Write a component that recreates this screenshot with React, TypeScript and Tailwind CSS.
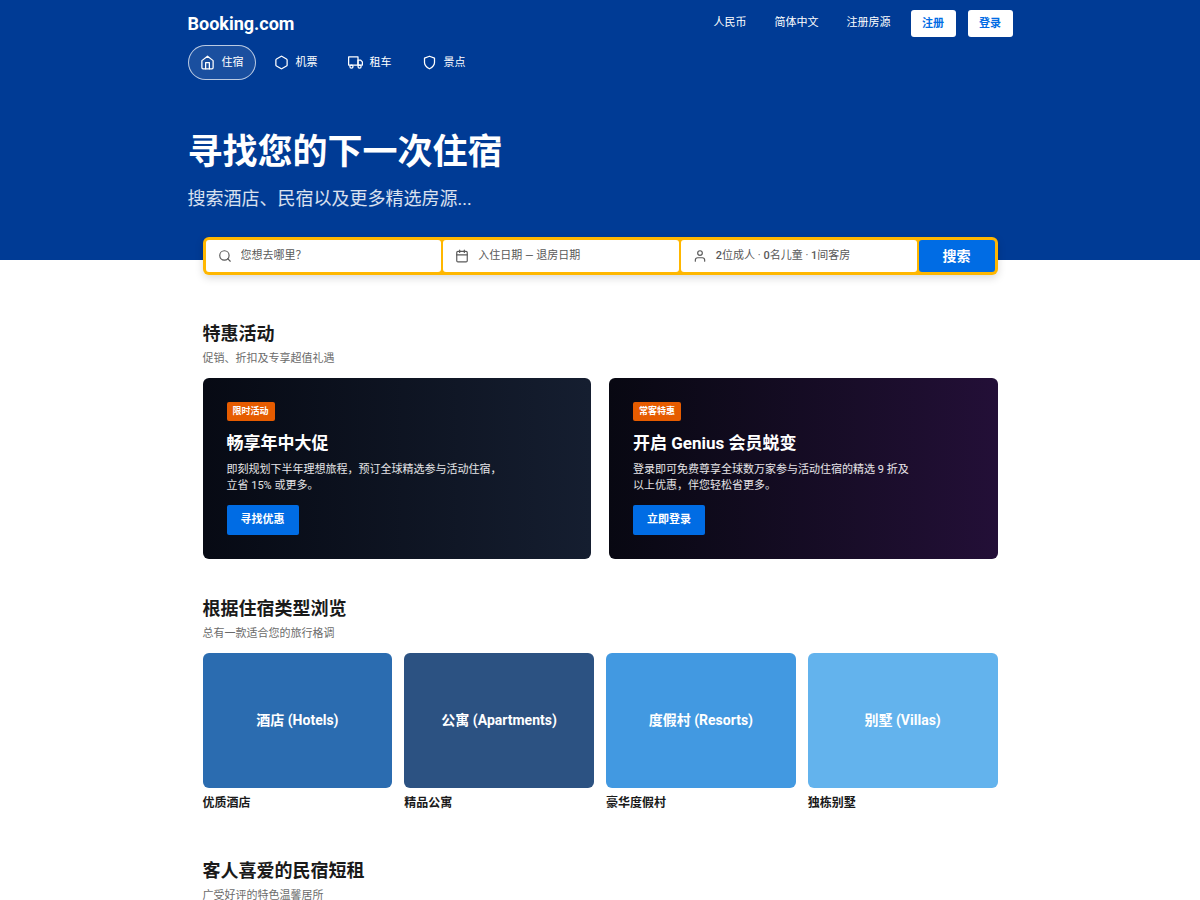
import React, { useState } from 'react';
import type { IconType } from 'react-icons';
import { FiHome, FiHexagon, FiTruck, FiShield, FiSearch, FiCalendar, FiUser } from 'react-icons/fi';

interface NavTab {
  id: string;
  label: string;
  icon: IconType;
}

interface Promo {
  badge: string;
  title: string;
  text: string;
  action: string;
  background: string;
}

interface PropertyType {
  name: string;
  caption: string;
  color: string;
}

const tabs: NavTab[] = [
  { id: 'stays', label: '住宿', icon: FiHome },
  { id: 'flights', label: '机票', icon: FiHexagon },
  { id: 'cars', label: '租车', icon: FiTruck },
  { id: 'attractions', label: '景点', icon: FiShield },
];

const headerLinks = ['人民币', '简体中文', '注册房源'];

const promos: Promo[] = [
  {
    badge: '限时活动',
    title: '畅享年中大促',
    text: '即刻规划下半年理想旅程，预订全球精选参与活动住宿，立省 15% 或更多。',
    action: '寻找优惠',
    background: 'bg-linear-to-r from-[#070a14] to-[#151e30]',
  },
  {
    badge: '常客特惠',
    title: '开启 Genius 会员蜕变',
    text: '登录即可免费尊享全球数万家参与活动住宿的精选 9 折及以上优惠，伴您轻松省更多。',
    action: '立即登录',
    background: 'bg-linear-to-r from-[#080812] to-[#230f37]',
  },
];

const propertyTypes: PropertyType[] = [
  { name: '酒店 (Hotels)', caption: '优质酒店', color: 'bg-[#2b6cb0]' },
  { name: '公寓 (Apartments)', caption: '精品公寓', color: 'bg-[#2c5282]' },
  { name: '度假村 (Resorts)', caption: '豪华度假村', color: 'bg-[#4299e1]' },
  { name: '别墅 (Villas)', caption: '独栋别墅', color: 'bg-[#63b3ed]' },
];

function Header() {
  const [activeTab, setActiveTab] = useState('stays');

  return (
    <header className="bg-[#003b95] text-white pt-[9px] pb-12">
      <div className="max-w-[825px] mx-auto">
        <div className="flex items-center justify-between">
          <a href="#" className="text-[18px] leading-[27px] font-bold">Booking.com</a>
          <div className="flex items-center gap-3 text-[11px] leading-[28px]">
            {headerLinks.map((label) => (
              <a key={label} href="#" className="px-2">{label}</a>
            ))}
            <button className="w-[45px] h-[27px] bg-white text-[#006ce4] font-bold rounded-[3px]">注册</button>
            <button className="w-[45px] h-[27px] bg-white text-[#006ce4] font-bold rounded-[3px]">登录</button>
          </div>
        </div>

        <nav className="flex gap-[6px] mt-2">
          {tabs.map(({ id, label, icon: Icon }) => (
            <button
              key={id}
              onClick={() => setActiveTab(id)}
              className={`flex items-center gap-[7px] h-[35px] px-[11px] rounded-full border text-[11px] leading-[18px] ${
                activeTab === id ? 'border-white/70 bg-white/10' : 'border-transparent'
              }`}
            >
              <Icon className="w-[15px] h-[15px]" />
              {label}
            </button>
          ))}
        </nav>

        <h1 className="mt-[52px] text-[35px] leading-[42px] font-bold">寻找您的下一次住宿</h1>
        <p className="mt-[11px] text-[18px] leading-[27px] text-white/85">搜索酒店、民宿以及更多精选房源...</p>
      </div>
    </header>
  );
}

function SearchBar() {
  return (
    <form
      onSubmit={(e) => e.preventDefault()}
      className="flex gap-[2px] h-[38px] p-[3px] -mt-[23px] bg-[#ffb700] rounded-[6px] shadow-[0_3px_9px_rgba(0,0,0,0.15)] text-[11px] leading-[18px] text-[#595959]"
    >
      <label className="flex flex-1 items-center gap-[9px] px-3 bg-white rounded-[3px]">
        <FiSearch className="w-[14px] h-[14px] shrink-0" />
        <input
          type="text"
          aria-label="目的地"
          placeholder="您想去哪里？"
          className="w-full min-w-0 h-[18px] outline-none placeholder:text-[#595959]"
        />
      </label>
      <button type="button" className="flex flex-1 items-center gap-[9px] px-3 bg-white rounded-[3px]">
        <FiCalendar className="w-[14px] h-[14px]" />
        入住日期 — 退房日期
      </button>
      <button type="button" className="flex flex-1 items-center gap-[9px] px-3 bg-white rounded-[3px]">
        <FiUser className="w-[14px] h-[14px]" />
        <span>
          <span className="font-medium">2</span>位成人 · <span className="font-medium">0</span>名儿童 ·{' '}
          <span className="font-medium">1</span>间客房
        </span>
      </button>
      <button type="submit" className="w-[76px] bg-[#006ce4] text-white text-[14px] font-bold rounded-[3px]">
        搜索
      </button>
    </form>
  );
}

function SectionHeading({ title, subtitle }: { title: string; subtitle: string }) {
  return (
    <div className="mb-[10px]">
      <h2 className="text-[18px] leading-[27px] font-bold text-[#1a1a1a]">{title}</h2>
      <p className="mt-[3px] text-[11px] leading-[18px] text-[#6b6b6b]">{subtitle}</p>
    </div>
  );
}

function PromoCard({ promo }: { promo: Promo }) {
  return (
    <article className={`p-6 rounded-[6px] text-white ${promo.background}`}>
      <div className="w-fit px-[6px] bg-[#e65c00] rounded-[2px] text-[9px] leading-[19px] font-bold">
        {promo.badge}
      </div>
      <h3 className="mt-[10px] text-[17px] leading-[24px] font-bold">{promo.title}</h3>
      <p className="mt-[7px] max-w-[280px] text-[11px] leading-[16px] text-white/90">{promo.text}</p>
      <button className="mt-[11px] h-[30px] px-[14px] bg-[#006ce4] rounded-[2px] text-[11px] leading-[30px] font-bold">
        {promo.action}
      </button>
    </article>
  );
}

export default function App() {
  return (
    <div className="min-h-screen bg-white font-['Roboto','Noto_Sans_CJK_SC',sans-serif]" lang="zh-CN">
      <Header />

      <main className="max-w-[825px] mx-auto px-[15px]">
        <SearchBar />

        <section className="mt-[45px]">
          <SectionHeading title="特惠活动" subtitle="促销、折扣及专享超值礼遇" />
          <div className="grid grid-cols-2 gap-[18px]">
            {promos.map((promo) => (
              <PromoCard key={promo.title} promo={promo} />
            ))}
          </div>
        </section>

        <section className="mt-9">
          <SectionHeading title="根据住宿类型浏览" subtitle="总有一款适合您的旅行格调" />
          <div className="grid grid-cols-4 gap-3">
            {propertyTypes.map((type) => (
              <a key={type.name} href="#">
                <div
                  className={`flex items-center justify-center h-[135px] rounded-[6px] text-white text-[14px] font-bold ${type.color}`}
                >
                  {type.name}
                </div>
                <p className="mt-[6px] text-[12px] leading-[18px] font-bold text-[#1a1a1a]">{type.caption}</p>
              </a>
            ))}
          </div>
        </section>

        <section className="mt-[45px]">
          <SectionHeading title="客人喜爱的民宿短租" subtitle="广受好评的特色温馨居所" />
        </section>
      </main>
    </div>
  );
}
